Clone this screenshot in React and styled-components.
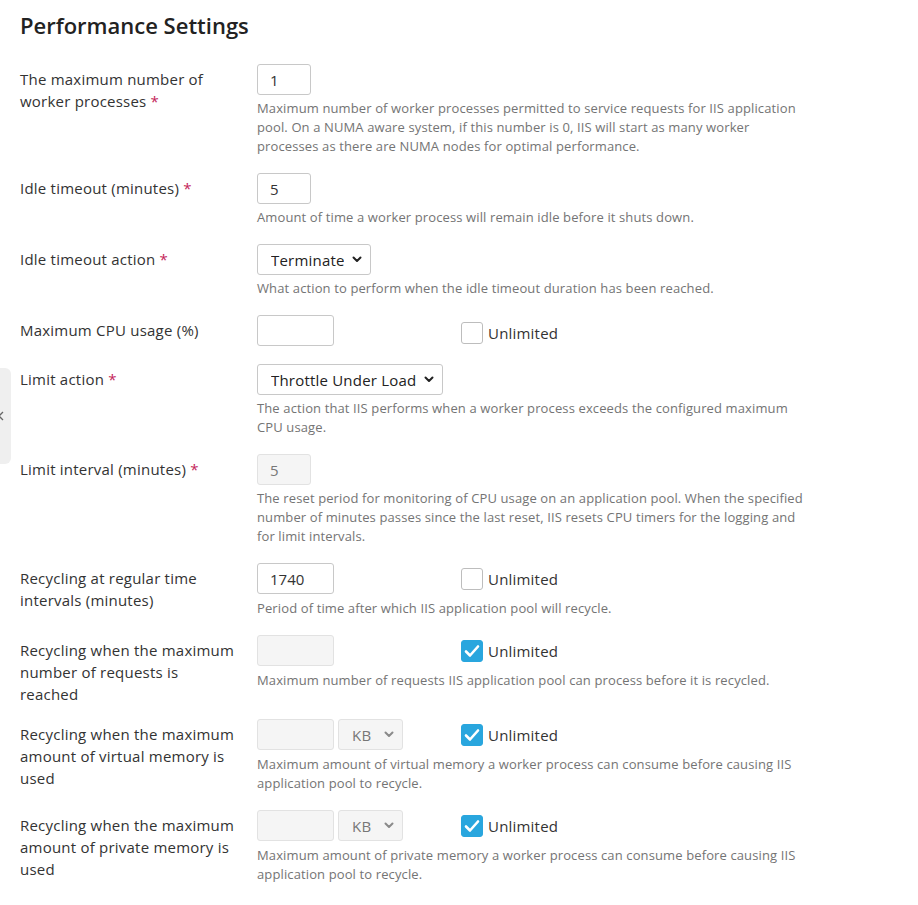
import React from "react";
import styled, { createGlobalStyle } from "styled-components";

const GlobalStyle = createGlobalStyle`
  body {
    margin: 0;
    background: #fff;
    font-family: "Open Sans", "Liberation Sans", sans-serif;
    color: #333;
  }
`;

const Page = styled.div`
  position: relative;
  padding: 10px 20px 20px;
`;

const Title = styled.h2`
  margin: 0 0 24px;
  font-size: 22px;
  line-height: 30px;
  font-weight: 600;
  color: #222;
`;

const Form = styled.div`
  display: grid;
  grid-template-columns: 237px 1fr;
  row-gap: 14px;
`;

const Label = styled.div`
  padding-top: 4px;
  padding-right: 19px;
  font-size: 15px;
  line-height: 22px;
  letter-spacing: 0.22px;
  color: #333;
`;

const Required = styled.span`
  color: #c41f5a;
`;

const Control = styled.div`
  display: flex;
  flex-direction: column;
`;

const Inline = styled.div`
  display: flex;
  align-items: center;
  min-height: ${p => (p.$tall ? "35px" : "32px")};
  align-self: flex-start;
  width: 100%;
`;

const Group = styled.div`
  display: flex;
  gap: 4px;
  width: 204px;
  align-self: flex-start;
`;

const Input = styled.input`
  box-sizing: border-box;
  width: ${p => p.$w}px;
  height: 31px;
  padding: 0 12px;
  border: 1px solid ${p => (p.disabled ? "#e2e2e2" : "#c8c8c8")};
  border-radius: 3px;
  background: ${p => (p.disabled ? "#f5f5f5" : "#fff")};
  font-family: "Open Sans", "Liberation Sans", sans-serif;
  font-size: 15px;
  color: ${p => (p.disabled ? "#777" : "#333")};
  outline: none;
`;

const SelectWrap = styled.div`
  position: relative;
  width: ${p => p.$w}px;
  height: 31px;
`;

const Select = styled.select`
  appearance: none;
  box-sizing: border-box;
  width: 100%;
  height: 31px;
  padding: 0 26px 0 13px;
  border: 1px solid ${p => (p.disabled ? "#e2e2e2" : "#c8c8c8")};
  border-radius: 3px;
  background: ${p => (p.disabled ? "#f5f5f5" : "#fff")};
  font-family: "Open Sans", "Liberation Sans", sans-serif;
  font-size: 15px;
  letter-spacing: 0.2px;
  color: ${p => (p.disabled ? "#777" : "#222")};
  opacity: 1;
`;

const Arrow = styled.svg`
  position: absolute;
  right: 9px;
  top: 12px;
  pointer-events: none;
`;

const Check = styled.label`
  display: flex;
  align-items: center;
  gap: 5px;
  font-size: 15px;
  letter-spacing: 0.2px;
  color: #333;
`;

const Box = styled.span`
  box-sizing: border-box;
  width: 22px;
  height: 22px;
  border-radius: 3px;
  border: 1px solid ${p => (p.$on ? "#29a6de" : "#bdbdbd")};
  background: ${p => (p.$on ? "#29a6de" : "#fff")};
  display: flex;
  align-items: center;
  justify-content: center;
`;

const Help = styled.div`
  max-width: 548px;
  margin: 4px 0 3px;
  font-size: 13px;
  line-height: 19px;
  letter-spacing: 0.12px;
  color: #747474;
`;

const SideTab = styled.div`
  position: absolute;
  left: 0;
  top: 368px;
  width: 11px;
  height: 96px;
  background: #efefef;
  border-radius: 0 6px 6px 0;
  overflow: hidden;
`;

const SideChevron = styled.svg`
  position: absolute;
  left: -3px;
  top: 43px;
`;

const Chevron = ({ disabled }) => (
  <Arrow width="10" height="7" viewBox="0 0 10 7">
    <path
      d="M1.5 1.5 L5 5 L8.5 1.5"
      fill="none"
      stroke={disabled ? "#8a8a8a" : "#222"}
      strokeWidth="2"
      strokeLinecap="round"
      strokeLinejoin="round"
    />
  </Arrow>
);

const Dropdown = ({ w, value, disabled }) => (
  <SelectWrap $w={w}>
    <Select disabled={disabled} defaultValue={value}>
      <option>{value}</option>
    </Select>
    <Chevron disabled={disabled} />
  </SelectWrap>
);

const Unlimited = ({ on }) => (
  <Check>
    <Box $on={on}>
      {on && (
        <svg width="16" height="14" viewBox="0 0 16 14">
          <path
            d="M2 7.5 L6 11.5 L14 2.5"
            fill="none"
            stroke="#fff"
            strokeWidth="2.6"
            strokeLinecap="round"
            strokeLinejoin="round"
          />
        </svg>
      )}
    </Box>
    Unlimited
  </Check>
);

const Row = ({ label, required, children, help }) => (
  <>
    <Label>
      {label}
      {required && (
        <>
          {" "}
          <Required>*</Required>
        </>
      )}
    </Label>
    <Control>
      {children}
      {help && <Help>{help}</Help>}
    </Control>
  </>
);

const App = () => (
  <Page>
    <GlobalStyle />
    <SideTab>
      <SideChevron width="8" height="10" viewBox="0 0 8 10">
        <path d="M6 1 L2 5 L6 9" fill="none" stroke="#666" strokeWidth="1.3" />
      </SideChevron>
    </SideTab>
    <Title>Performance Settings</Title>
    <Form>
      <Row
        label="The maximum number of worker processes"
        required
        help="Maximum number of worker processes permitted to service requests for IIS application pool. On a NUMA aware system, if this number is 0, IIS will start as many worker processes as there are NUMA nodes for optimal performance."
      >
        <Input $w={54} defaultValue="1" />
      </Row>

      <Row
        label="Idle timeout (minutes)"
        required
        help="Amount of time a worker process will remain idle before it shuts down."
      >
        <Input $w={54} defaultValue="5" />
      </Row>

      <Row
        label="Idle timeout action"
        required
        help="What action to perform when the idle timeout duration has been reached."
      >
        <Dropdown w={114} value="Terminate" />
      </Row>

      <Row label="Maximum CPU usage (%)">
        <Inline $tall>
          <Group>
            <Input $w={77} defaultValue="" />
          </Group>
          <Unlimited />
        </Inline>
      </Row>

      <Row
        label="Limit action"
        required
        help="The action that IIS performs when a worker process exceeds the configured maximum CPU usage."
      >
        <Dropdown w={186} value="Throttle Under Load" />
      </Row>

      <Row
        label="Limit interval (minutes)"
        required
        help="The reset period for monitoring of CPU usage on an application pool. When the specified number of minutes passes since the last reset, IIS resets CPU timers for the logging and for limit intervals."
      >
        <Input $w={54} defaultValue="5" disabled />
      </Row>

      <Row
        label="Recycling at regular time intervals (minutes)"
        help="Period of time after which IIS application pool will recycle."
      >
        <Inline>
          <Group>
            <Input $w={77} defaultValue="1740" />
          </Group>
          <Unlimited />
        </Inline>
      </Row>

      <Row
        label="Recycling when the maximum number of requests is reached"
        help="Maximum number of requests IIS application pool can process before it is recycled."
      >
        <Inline>
          <Group>
            <Input $w={77} defaultValue="" disabled />
          </Group>
          <Unlimited on />
        </Inline>
      </Row>

      <Row
        label="Recycling when the maximum amount of virtual memory is used"
        help="Maximum amount of virtual memory a worker process can consume before causing IIS application pool to recycle."
      >
        <Inline>
          <Group>
            <Input $w={77} defaultValue="" disabled />
            <Dropdown w={65} value="KB" disabled />
          </Group>
          <Unlimited on />
        </Inline>
      </Row>

      <Row
        label="Recycling when the maximum amount of private memory is used"
        help="Maximum amount of private memory a worker process can consume before causing IIS application pool to recycle."
      >
        <Inline>
          <Group>
            <Input $w={77} defaultValue="" disabled />
            <Dropdown w={65} value="KB" disabled />
          </Group>
          <Unlimited on />
        </Inline>
      </Row>
    </Form>
  </Page>
);

export default App;
